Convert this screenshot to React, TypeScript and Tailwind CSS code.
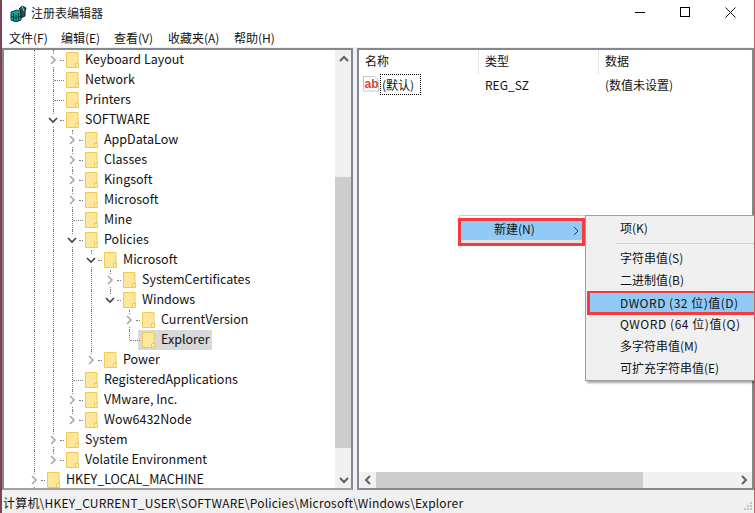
const font = { fontFamily: '"Noto Sans CJK SC", sans-serif' };

type TreeRow = {
  label: string;
  level: number;
  guides: number[];
  state: "open" | "closed" | "leaf";
  last?: boolean;
  selected?: boolean;
};

const rows: TreeRow[] = [
  { label: "Keyboard Layout", level: 1, guides: [0], state: "closed" },
  { label: "Network", level: 1, guides: [0], state: "leaf" },
  { label: "Printers", level: 1, guides: [0], state: "leaf" },
  { label: "SOFTWARE", level: 1, guides: [0], state: "open" },
  { label: "AppDataLow", level: 2, guides: [0, 1], state: "closed" },
  { label: "Classes", level: 2, guides: [0, 1], state: "closed" },
  { label: "Kingsoft", level: 2, guides: [0, 1], state: "closed" },
  { label: "Microsoft", level: 2, guides: [0, 1], state: "closed" },
  { label: "Mine", level: 2, guides: [0, 1], state: "leaf" },
  { label: "Policies", level: 2, guides: [0, 1], state: "open" },
  { label: "Microsoft", level: 3, guides: [0, 1, 2], state: "open" },
  { label: "SystemCertificates", level: 4, guides: [0, 1, 2, 3], state: "closed" },
  { label: "Windows", level: 4, guides: [0, 1, 2, 3], state: "open", last: true },
  { label: "CurrentVersion", level: 5, guides: [0, 1, 2, 3], state: "closed" },
  { label: "Explorer", level: 5, guides: [0, 1, 2, 3], state: "leaf", last: true, selected: true },
  { label: "Power", level: 3, guides: [0, 1, 2], state: "closed", last: true },
  { label: "RegisteredApplications", level: 2, guides: [0, 1], state: "leaf" },
  { label: "VMware, Inc.", level: 2, guides: [0, 1], state: "closed" },
  { label: "Wow6432Node", level: 2, guides: [0, 1], state: "closed", last: true },
  { label: "System", level: 1, guides: [0], state: "closed" },
  { label: "Volatile Environment", level: 1, guides: [0], state: "closed", last: true },
  { label: "HKEY_LOCAL_MACHINE", level: 0, guides: [], state: "closed" },
];

function Folder() {
  return (
    <svg width="13" height="16" viewBox="0 0 13 16" className="shrink-0">
      <path d="M.5.5h11.5v10.5h.5v4.5H.5z" fill="#fee79a" stroke="#f0cb54" />
      <path d="M9.5 15.5v-4h3" fill="#fff3c4" stroke="#f0cb54" />
    </svg>
  );
}

function Expander({ open }: { open: boolean }) {
  return (
    <span className="absolute left-[-6px] top-[4px] flex h-[12px] w-[12px] items-center justify-center bg-white">
      <svg width="10" height="10" viewBox="0 0 10 10">
        {open ? (
          <path d="M1 3l4 4 4-4" fill="none" stroke="#404040" strokeWidth="1.6" />
        ) : (
          <path d="M3 1l4 4-4 4" fill="none" stroke="#a6a6a6" strokeWidth="1.6" />
        )}
      </svg>
    </span>
  );
}

function Row({ row }: { row: TreeRow }) {
  const cols = [0, 1, 2, 3, 4].filter((c) => c < row.level);
  return (
    <div className="flex h-[20px] shrink-0 pl-[30px]">
      {cols.map((c) => (
        <div
          key={c}
          className={row.guides.includes(c) ? "h-full w-[19px] shrink-0 border-l border-dotted border-[#808080]" : "h-full w-[19px] shrink-0 border-l border-transparent"}
        />
      ))}
      <div className="relative h-full w-[13px] shrink-0">
        <div className={row.last ? "h-[10px] border-l border-dotted border-[#808080]" : "h-full border-l border-dotted border-[#808080]"} />
        <div className={row.state === "leaf" ? "absolute left-[1px] top-[10px] w-[10px] border-t border-dotted border-[#808080]" : "absolute left-[7px] top-[10px] w-[4px] border-t border-dotted border-[#808080]"} />
        {row.state !== "leaf" && <Expander open={row.state === "open"} />}
      </div>
      <div className={row.selected ? "-ml-[4px] flex h-full items-center bg-[#d9d9d9] pl-[4px] pr-[2px]" : "flex h-full items-center"}>
        <Folder />
        <span className="mb-[2px] ml-[6px] whitespace-nowrap text-[12.5px] leading-[18px] text-[#111]">{row.label}</span>
      </div>
    </div>
  );
}

function ArrowBtn({ dir }: { dir: "up" | "down" | "left" | "right" }) {
  const d = {
    up: "M1 7l4-4 4 4",
    down: "M1 3l4 4 4-4",
    left: "M7 1L3 5l4 4",
    right: "M3 1l4 4-4 4",
  }[dir];
  return (
    <div className="flex h-[17px] w-[17px] shrink-0 items-center justify-center">
      <svg width="10" height="10" viewBox="0 0 10 10">
        <path d={d} fill="none" stroke="#606060" strokeWidth="2" />
      </svg>
    </div>
  );
}

function AppIcon() {
  return (
    <svg width="17" height="17" viewBox="0 0 17 17" className="shrink-0">
      <path d="M1 7l6-2 4 2v8l-5 2-5-2z" fill="#1aa6a0" stroke="#083c3c" />
      <path d="M1 11l5 2 5-2M6 9v8M3.500 8v8M8.500 8v8" fill="none" stroke="#083c3c" />
      <path d="M9 4l3-3 4 2-1 3 0 5-4 2V7z" fill="#2b4f52" stroke="#0b2020" />
      <path d="M12 1l2 5" stroke="#7fd8d8" />
    </svg>
  );
}

function ValueIcon() {
  return (
    <svg width="17" height="17" viewBox="0 0 17 17" className="shrink-0">
      <path d="M.5 .5h11l4 4v11l-3-1-3 1-3-1-3 1-3-1z" fill="#fff" stroke="#c8c8c8" />
      <text x="1.500" y="11.500" fontSize="12" fontWeight="700" fontFamily="Liberation Sans" fill="#d6492c">ab</text>
    </svg>
  );
}

function Grip() {
  return (
    <svg width="9" height="9" viewBox="0 0 9 9" className="absolute bottom-[2px] right-[1px]">
      <path d="M6 0h2v2H6zM3 3h2v2H3zM6 3h2v2H6zM0 6h2v2H0zM3 6h2v2H3zM6 6h2v2H6z" fill="#c4c4c4" />
    </svg>
  );
}

export default function App() {
  return (
    <div style={font} className="relative flex h-[513px] w-[755px] flex-col overflow-hidden border-l-2 border-r border-l-[#7a4450] border-r-[#d05a5a] bg-[#f0f0f0] text-[12px] text-[#111]">
      <div className="flex h-[26px] shrink-0 items-center bg-white pl-[8px]">
        <AppIcon />
        <span className="ml-[4px] text-[12px] text-[#222]">注册表编辑器</span>
        <div className="mb-[2px] ml-auto flex items-center pr-[18px]">
          <div className="mr-[35px] h-px w-[10px] bg-black" />
          <div className="mr-[35px] h-[10px] w-[10px] border border-black" />
          <svg width="11" height="11" viewBox="0 0 11 11">
            <path d="M.5.500l10 10M10.500.500l-10 10" stroke="#111" />
          </svg>
        </div>
      </div>

      <div className="flex h-[21px] shrink-0 items-center bg-white pl-[7px] pt-[2px]">
        <span className="w-[52px]">文件(F)</span>
        <span className="w-[53px]">编辑(E)</span>
        <span className="w-[54px]">查看(V)</span>
        <span className="w-[66px]">收藏夹(A)</span>
        <span>帮助(H)</span>
      </div>

      <div className="flex min-h-0 flex-1 pt-[1px]">
        <div className="flex w-[351px] shrink-0 border-2 border-[#828790] border-b-[#a0a0a0] bg-white">
          <div className="flex min-w-0 flex-1 flex-col overflow-hidden">
            {rows.map((row, i) => (
              <Row key={i} row={row} />
            ))}
          </div>
          <div className="flex w-[16px] shrink-0 flex-col bg-[#f0f0f0]">
            <ArrowBtn dir="up" />
            <div className="mt-[110px] h-[271px] w-full bg-[#cdcdcd]" />
            <div className="flex-1" />
            <ArrowBtn dir="down" />
          </div>
        </div>

        <div className="ml-[4px] flex min-w-0 flex-1 flex-col border-2 border-[#828790] bg-white">
          <div className="flex h-[24px] shrink-0 items-center">
            <div className="flex h-full w-[120px] items-center border-r border-[#e5e5e5] pb-[2px] pl-[6px]">名称</div>
            <div className="flex h-full w-[120px] items-center border-r border-[#e5e5e5] pb-[2px] pl-[6px]">类型</div>
            <div className="pb-[2px] pl-[6px]">数据</div>
          </div>
          <div className="flex h-[21px] shrink-0 items-center">
            <div className="flex w-[120px] items-center pl-[4px]">
              <ValueIcon />
              <span className="flex h-[21px] items-center border border-dotted border-black pl-[1px] pr-[6px]">(默认)</span>
            </div>
            <div className="w-[120px] pl-[6px]">REG_SZ</div>
            <div className="pl-[6px]">(数值未设置)</div>
          </div>
          <div className="flex-1" />
          <div className="flex h-[16px] shrink-0 items-center bg-[#f0f0f0]">
            <ArrowBtn dir="left" />
            <div className="h-full w-[267px] bg-[#cdcdcd]" />
            <div className="flex-1" />
            <ArrowBtn dir="right" />
          </div>
        </div>
      </div>

      <div className="relative flex h-[23px] shrink-0 items-center pl-[1px] pt-[2px] text-[12px] tracking-[0.2px]">
        计算机\HKEY_CURRENT_USER\SOFTWARE\Policies\Microsoft\Windows\Explorer
        <Grip />
      </div>

      <div className="absolute left-[457px] top-[215px] h-[31px] w-[127px] border-t border-l border-[#d0d0d0] bg-white">
        <div className="-ml-[2px] mt-[2px] h-[28px] w-[127px] border-[3px] border-[#f53b3b] bg-[#e4e4e4]">
          <div className="flex h-[19px] items-center bg-[#91c9f7] pl-[33px] pr-[3px]">
            <span className="mb-[4px]">新建(N)</span>
            <svg width="6" height="8" viewBox="0 0 6 8" className="ml-auto">
              <path d="M1 0l4 4-4 4" fill="none" stroke="#333" />
            </svg>
          </div>
        </div>
      </div>

      <div className="absolute left-[583px] top-[215px] w-[171px] border border-r-0 border-[#a0a0a0] bg-[#f0f0f0] pb-[1px] pt-[1px] shadow-[2px_2px_2px_rgba(0,0,0,0.35)]">
        <div className="flex h-[22px] items-center pl-[34px]">项(K)</div>
        <div className="ml-[30px] mb-[3px] mt-[4px] border-t border-[#d0d0d0]" />
        <div className="flex h-[22px] items-center pl-[34px]">字符串值(S)</div>
        <div className="flex h-[22px] items-center pl-[34px]">二进制值(B)</div>
        <div className="relative z-10 -mb-[2px] ml-[1px] flex h-[24px] items-center border-b-[3px] border-l-[3px] border-t-[2px] border-[#f53b3b] bg-[#91c9f7] pl-[30px] tracking-[0.5px]">DWORD (32 位)值(D)</div>
        <div className="flex h-[22px] items-center pl-[34px] tracking-[0.55px]">QWORD (64 位)值(Q)</div>
        <div className="flex h-[22px] items-center pl-[34px]">多字符串值(M)</div>
        <div className="flex h-[22px] items-center pl-[34px]">可扩充字符串值(E)</div>
      </div>
    </div>
  );
}
